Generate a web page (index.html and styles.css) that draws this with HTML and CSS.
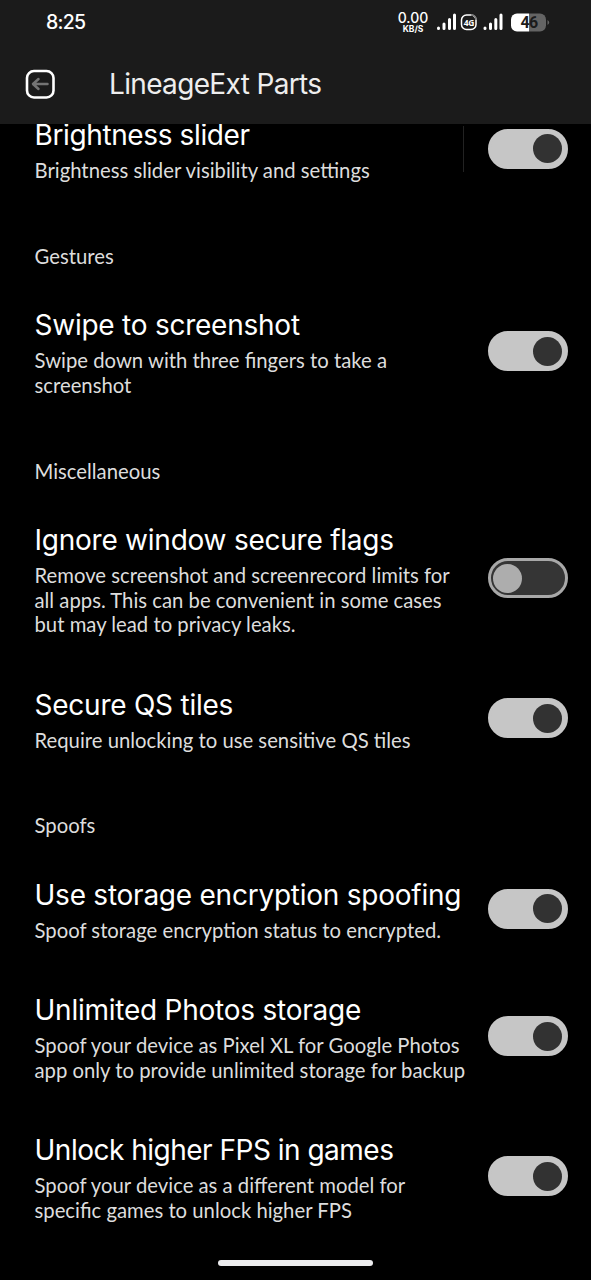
FILE: index.html
```html
<!DOCTYPE html>
<html lang="en">
<head>
<meta charset="utf-8">
<title>LineageExt Parts</title>
<link rel="stylesheet" href="styles.css">
</head>
<body>
<header class="top">
  <div class="status">
    <span class="clock">8:25</span>
    <div class="indicators">
      <div class="speed"><span class="rate">0.00</span><span class="unit">KB/S</span></div>
      <svg class="signals" width="115" height="22" viewBox="0 0 115 22">
        <g stroke="#fff" stroke-width="3" stroke-linecap="round">
          <path d="M2.5 17v.5M8 13v4.500M13.500 8.500v9M18.500 4v13.500"/>
          <path d="M49 17v.5M54.500 13v4.500M59.800 8.500v9M65 4v13.500"/>
        </g>
        <rect x="25.500" y="4" width="14.500" height="14.500" rx="5" fill="none" stroke="#fff" stroke-width="1.500"/>
        <path d="M35 4q5 0 5 5" fill="none" stroke="#777" stroke-width="1.500"/>
        <text class="net" x="32.800" y="14.500" text-anchor="middle">4G</text>
        <path d="M81 2.500h12v18H81a6 6 0 0 1-6-6v-6a6 6 0 0 1 6-6z" fill="#fff"/>
        <path d="M93 2.500h11a6 6 0 0 1 6 6v6a6 6 0 0 1-6 6H93z" fill="#646464"/>
        <path d="M111.500 9q3.500 2.500 0 5z" fill="#646464"/>
        <text class="level" x="93" y="17" text-anchor="middle">46</text>
      </svg>
    </div>
  </div>
  <div class="bar">
    <svg class="back" width="30" height="30" viewBox="0 0 30 30" fill="none">
      <rect x="2" y="2" width="26.500" height="26.500" rx="7" stroke="#fff" stroke-width="2.600"/>
      <path d="M22.500 15H8.500M13.500 10l-5.500 5 5.500 5" stroke="#747474" stroke-width="2.500" stroke-linecap="round" stroke-linejoin="round"/>
    </svg>
    <h1 class="heading">LineageExt Parts</h1>
  </div>
</header>
<main class="list">
  <section class="item">
    <div class="text"><h2 class="title t-brightness">Brightness slider</h2><p class="summary">Brightness slider visibility and settings</p></div>
    <span class="divider"></span><span class="switch on"></span>
  </section>
  <h3 class="category">Gestures</h3>
  <section class="item">
    <div class="text"><h2 class="title">Swipe to screenshot</h2><p class="summary">Swipe down with three fingers to take a<br>screenshot</p></div>
    <span class="switch on"></span>
  </section>
  <h3 class="category">Miscellaneous</h3>
  <section class="item">
    <div class="text"><h2 class="title">Ignore window secure flags</h2><p class="summary">Remove screenshot and screenrecord limits for<br>all apps. This can be convenient in some cases<br>but may lead to privacy leaks.</p></div>
    <span class="switch"></span>
  </section>
  <section class="item">
    <div class="text"><h2 class="title">Secure QS tiles</h2><p class="summary">Require unlocking to use sensitive QS tiles</p></div>
    <span class="switch on"></span>
  </section>
  <h3 class="category">Spoofs</h3>
  <section class="item">
    <div class="text"><h2 class="title">Use storage encryption spoofing</h2><p class="summary">Spoof storage encryption status to encrypted.</p></div>
    <span class="switch on"></span>
  </section>
  <section class="item">
    <div class="text"><h2 class="title">Unlimited Photos storage</h2><p class="summary">Spoof your device as Pixel XL for Google Photos<br>app only to provide unlimited storage for backup</p></div>
    <span class="switch on"></span>
  </section>
  <section class="item">
    <div class="text"><h2 class="title t-fps">Unlock higher FPS in games</h2><p class="summary">Spoof your device as a different model for<br>specific games to unlock higher FPS</p></div>
    <span class="switch on"></span>
  </section>
</main>
<div class="nav-handle"></div>
</body>
</html>
```
FILE: styles.css
```css
* { box-sizing: border-box; }
html { background: #000; }
body {
  margin: 0;
  width: 591px;
  height: 1280px;
  overflow: hidden;
  background: #000;
  color: #fff;
  font-family: Lato, Carlito, sans-serif;
  display: flex;
  flex-direction: column;
}
h1, h2, h3, p { margin: 0; font-weight: 400; white-space: nowrap; }
.top {
  position: relative;
  z-index: 1;
  flex: none;
  height: 124px;
  background: #1b1b1b;
}
.status {
  height: 44px;
  padding: 0 40px 0 46px;
  display: flex;
  justify-content: space-between;
  align-items: center;
}
.clock { font: 500 19.5px/24px Inter, sans-serif; letter-spacing: -0.7px; }
.indicators { display: flex; align-items: center; gap: 7px; }
.speed {
  width: 32px;
  display: flex;
  flex-direction: column;
  align-items: center;
  font-family: Inter, sans-serif;
}
.rate { font-size: 14px; line-height: 13px; font-weight: 500; }
.unit { font-size: 8.5px; line-height: 10px; font-weight: 700; }
.signals { display: block; }
.net { font: 700 8.5px "Open Sans", sans-serif; fill: #fff; letter-spacing: -0.5px; }
.level { font: 700 16px Roboto, sans-serif; fill: #1b1b1b; letter-spacing: -0.8px; }
.bar { height: 80px; padding-left: 25px; display: flex; align-items: center; }
.back { flex: none; }
.heading { margin-left: 54px; color: #eee; font: 400 28px/36px Inter, sans-serif; letter-spacing: -0.66px; }
.list { flex: none; height: 1167px; margin-top: -33px; padding: 0 23px 0 34.5px; }
.item {
  display: flex;
  align-items: center;
  padding: 22.4px 0;
}
.text { flex: 1; min-width: 0; padding-top: 2.5px; }
.title { font: 400 28px/38px Inter, sans-serif; letter-spacing: -0.24px; }
.t-brightness { letter-spacing: -0.38px; }
.t-fps { letter-spacing: -0.5px; }
.summary { padding: 4px 0 1.5px; font-size: 20.3px; line-height: 24.55px; color: #ddd; }
.category { height: 75px; padding-top: 37.5px; font-size: 20.3px; line-height: 24px; color: #ddd; }
.divider { width: 1px; height: 46px; margin-right: 24px; background: #222; }
.switch {
  flex: none;
  width: 80px;
  height: 40px;
  padding: 2px 3px 2px 2px;
  border: 3px solid #a8a8a8;
  border-radius: 20px;
  background: #353535;
  display: flex;
  align-items: center;
}
.switch::before {
  content: "";
  width: 29px;
  height: 29px;
  border-radius: 50%;
  background: #adadad;
}
.switch.on { justify-content: flex-end; background: #c6c6c6; border-color: #c6c6c6; }
.switch.on::before { background: #323232; }
.nav-handle {
  flex: none;
  width: 155px;
  height: 6px;
  margin: 2px 0 0 218px;
  border-radius: 3px;
  background: #ececee;
}
```
